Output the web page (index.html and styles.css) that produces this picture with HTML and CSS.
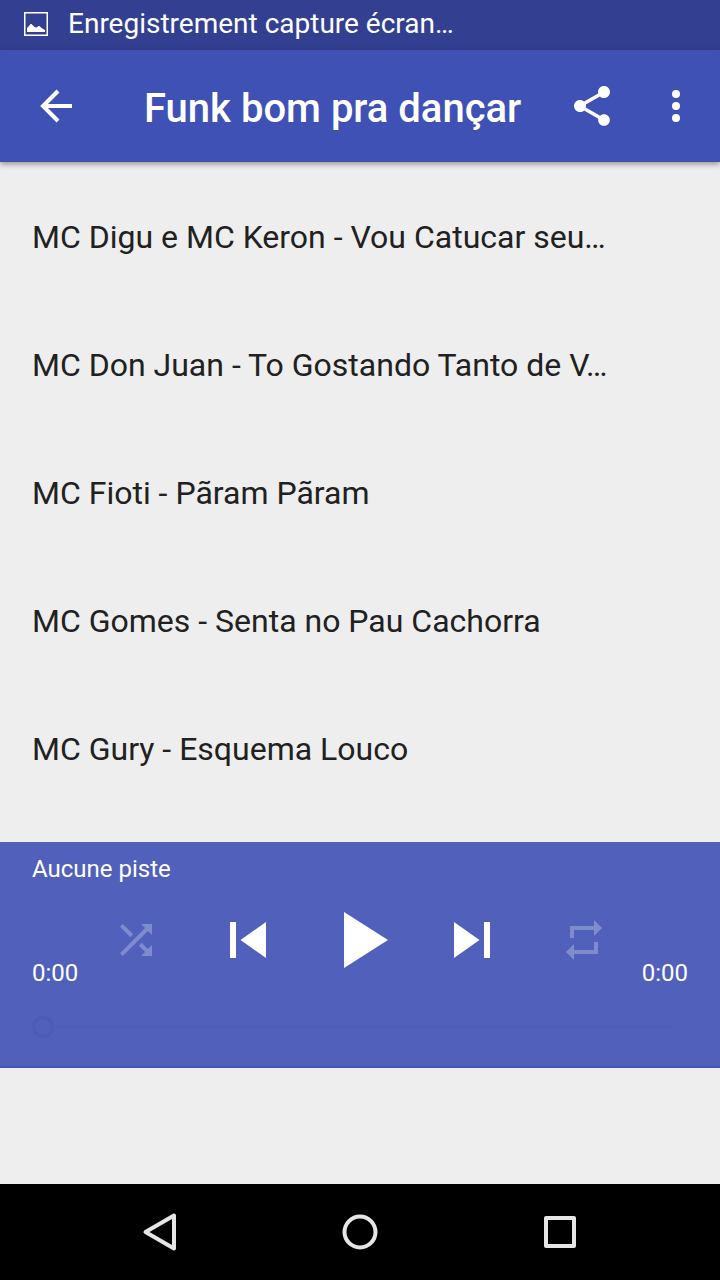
FILE: index.html
```html
<!DOCTYPE html>
<html lang="fr">
<head>
<meta charset="utf-8">
<meta name="viewport" content="width=device-width, initial-scale=1">
<title>Funk bom pra dançar</title>
<link rel="stylesheet" href="styles.css">
</head>
<body>
<div class="screen">
  <div class="status-bar">
    <svg class="status-icon" viewBox="0 0 24 24" aria-hidden="true">
      <rect x="0.75" y="0.75" width="22.5" height="22.5" fill="none" stroke="currentColor" stroke-width="1.5"/>
      <path d="M3 20v-4l2-2 1.500-2h1l3 3 2 .5 2-1.500h1l2 2 3.500 2v2z" fill="currentColor"/>
    </svg>
    <span>Enregistrement capture écran…</span>
  </div>

  <header class="toolbar">
    <button class="icon-button" type="button" aria-label="Retour">
      <svg class="icon" viewBox="0 0 48 48" fill="none" stroke="currentColor" stroke-width="4" aria-hidden="true">
        <path d="M10 24h30M26 9L11 24l15 15"/>
      </svg>
    </button>
    <h1 class="title">Funk bom pra dançar</h1>
    <button class="icon-button" type="button" aria-label="Partager">
      <svg class="icon" viewBox="0 0 24 24" fill="currentColor" aria-hidden="true">
        <path d="M18 16.08c-.76 0-1.44.3-1.96.77L8.91 12.7c.05-.23.09-.46.09-.7s-.04-.47-.09-.7l7.05-4.11c.54.5 1.25.81 2.04.81 1.66 0 3-1.34 3-3s-1.34-3-3-3-3 1.34-3 3c0 .24.04.47.09.7L8.04 9.81C7.5 9.31 6.79 9 6 9c-1.66 0-3 1.34-3 3s1.34 3 3 3c.79 0 1.5-.31 2.04-.81l7.12 4.16c-.05.21-.08.43-.08.65 0 1.61 1.31 2.92 2.92 2.92s2.92-1.31 2.92-2.92-1.31-2.92-2.92-2.92z"/>
      </svg>
    </button>
    <button class="icon-button more" type="button" aria-label="Plus d'options">
      <svg class="icon" viewBox="0 0 24 24" fill="currentColor" aria-hidden="true">
        <circle cx="12" cy="6" r="2"/><circle cx="12" cy="12" r="2"/><circle cx="12" cy="18" r="2"/>
      </svg>
    </button>
  </header>

  <main class="content">
    <ul class="tracks">
      <li class="track">MC Digu e MC Keron - Vou Catucar seu…</li>
      <li class="track">MC Don Juan - To Gostando Tanto de V…</li>
      <li class="track">MC Fioti - Pãram Pãram</li>
      <li class="track">MC Gomes - Senta no Pau Cachorra</li>
      <li class="track">MC Gury - Esquema Louco</li>
    </ul>
  </main>

  <section class="player" aria-label="Lecteur">
    <p class="now-playing">Aucune piste</p>
    <div class="controls">
      <span class="time">0:00</span>
      <button class="control off" type="button" aria-label="Lecture aléatoire">
        <svg class="icon" viewBox="0 0 24 24" fill="currentColor" aria-hidden="true"><path d="M10.59 9.17L5.41 4 4 5.41l5.17 5.17 1.42-1.41zM14.5 4l2.04 2.04L4 18.59 5.41 20 17.96 7.46 20 9.5V4h-5.5zm.33 9.41l-1.41 1.41 3.13 3.13L14.5 20H20v-5.5l-2.04 2.04-3.13-3.13z"/></svg>
      </button>
      <button class="control" type="button" aria-label="Précédent">
        <svg class="icon-medium" viewBox="0 0 24 24" fill="currentColor" aria-hidden="true"><path d="M6 6h2v12H6zm3.5 6l8.5 6V6z"/></svg>
      </button>
      <button class="control" type="button" aria-label="Lire">
        <svg class="icon-large" viewBox="0 0 24 24" fill="currentColor" aria-hidden="true"><path d="M8 5v14l11-7z"/></svg>
      </button>
      <button class="control" type="button" aria-label="Suivant">
        <svg class="icon-medium" viewBox="0 0 24 24" fill="currentColor" aria-hidden="true"><path d="M6 18l8.5-6L6 6v12zM16 6v12h2V6h-2z"/></svg>
      </button>
      <button class="control off" type="button" aria-label="Répéter">
        <svg class="icon" viewBox="0 0 24 24" fill="currentColor" aria-hidden="true"><path d="M7 7h10v3l4-4-4-4v3H5v6h2V7zm10 10H7v-3l-4 4 4 4v-3h12v-6h-2v4z"/></svg>
      </button>
      <span class="time">0:00</span>
    </div>
    <input class="seek" type="range" min="0" max="100" value="0" aria-label="Position">
  </section>

  <nav class="nav-bar" aria-label="Navigation système">
    <button class="nav-button" type="button" aria-label="Précédent">
      <svg class="icon" viewBox="0 0 48 48" aria-hidden="true"><path d="M38 7.500v33L9.500 24z"/></svg>
    </button>
    <button class="nav-button" type="button" aria-label="Accueil">
      <svg class="icon" viewBox="0 0 48 48" aria-hidden="true"><circle cx="24" cy="24" r="15.500"/></svg>
    </button>
    <button class="nav-button" type="button" aria-label="Applications récentes">
      <svg class="icon" viewBox="0 0 48 48" aria-hidden="true"><rect x="10" y="10" width="28" height="28"/></svg>
    </button>
  </nav>
</div>
</body>
</html>
```

FILE: styles.css
```css
* {
  box-sizing: border-box;
}

body {
  margin: 0;
  background: #eeeeee;
  color: #212121;
  font-family: Roboto, "Noto Sans", sans-serif;
}

button {
  display: flex;
  align-items: center;
  justify-content: center;
  padding: 0;
  border: 0;
  background: none;
  color: inherit;
}

svg {
  display: block;
  flex: none;
}

.screen {
  display: flex;
  flex-direction: column;
  min-height: 100vh;
}

.status-bar {
  display: flex;
  align-items: center;
  gap: 20px;
  height: 50px;
  padding: 0 24px 2px;
  background: #334092;
  color: #ffffff;
  font-size: 28px;
  line-height: 32px;
  white-space: nowrap;
}

.status-icon {
  width: 24px;
  height: 24px;
}

.toolbar {
  display: flex;
  align-items: center;
  height: 112px;
  background: #3f51b5;
  color: #ffffff;
  box-shadow: 0 2px 6px rgba(0, 0, 0, 0.4);
}

.icon-button {
  flex: none;
  width: 112px;
  height: 112px;
}

.more {
  width: 88px;
  margin-left: -16px;
}

.icon {
  width: 48px;
  height: 48px;
}

.icon-medium {
  width: 72px;
  height: 72px;
}

.icon-large {
  width: 96px;
  height: 96px;
}

.title {
  flex: 1;
  min-width: 0;
  margin: 0;
  padding: 6px 0 0 32px;
  overflow: hidden;
  font-size: 40px;
  font-weight: 500;
  line-height: 52px;
  text-overflow: ellipsis;
  white-space: nowrap;
}

.content {
  padding: 12px 32px 28px;
}

.tracks {
  margin: 0;
  padding: 0;
  list-style: none;
}

.track {
  height: 128px;
  overflow: hidden;
  font-size: 32px;
  line-height: 126px;
  text-overflow: ellipsis;
  white-space: nowrap;
}

.player {
  padding: 12px 32px 16px;
  border-bottom: 2px solid #4656b6;
  background: #5060bb;
  color: #ffffff;
}

.now-playing {
  margin: 0;
  font-size: 24px;
  line-height: 30px;
}

.controls {
  display: flex;
  justify-content: center;
  height: 112px;
}

.control {
  flex: 0 1 112px;
  min-width: 0;
}

.off {
  color: #7f8bcd;
}

.time {
  align-self: flex-end;
  margin-bottom: 8px;
  font-size: 24px;
  line-height: 30px;
}

.controls .time:first-child {
  margin-right: auto;
}

.controls .time:last-child {
  margin-left: auto;
}

.seek {
  display: block;
  width: 100%;
  height: 54px;
  margin: 0;
  padding-top: 8px;
  appearance: none;
  background: none;
}

.seek::-webkit-slider-runnable-track {
  height: 2px;
  background: linear-gradient(#4d5db9, #4d5db9) no-repeat 24px 0 / calc(100% - 40px) 2px;
}

.seek::-webkit-slider-thumb {
  width: 22px;
  height: 22px;
  margin: -10px 0 0;
  appearance: none;
  border: 3px solid #4c5bb7;
  border-radius: 50%;
  background: #5060bb;
}

.nav-bar {
  display: flex;
  justify-content: center;
  margin-top: auto;
  height: 96px;
  background: #000000;
}

.nav-button {
  flex: 0 1 200px;
}

.nav-button .icon {
  fill: none;
  stroke: #e6e6e6;
  stroke-width: 4;
  stroke-linejoin: round;
}
```
